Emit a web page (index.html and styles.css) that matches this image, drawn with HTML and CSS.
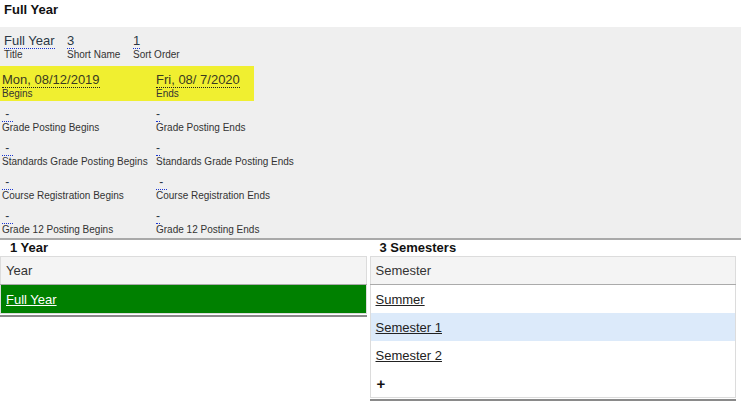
FILE: index.html
```html
<!DOCTYPE html>
<html lang="en">
<head>
    <meta charset="UTF-8">
    <meta name="viewport" content="width=device-width, initial-scale=1.0">
    <title>Full Year</title>
    <link rel="stylesheet" href="styles.css">
</head>
<body>

    <h1 class="page-title">Full Year</h1>

    <!-- Term details -->
    <div class="details">
        <div class="row row-top">
            <div class="field f-title">
                <span class="value">Full Year</span>
                <span class="label">Title</span>
            </div>
            <div class="field f-short">
                <span class="value">3</span>
                <span class="label">Short Name</span>
            </div>
            <div class="field">
                <span class="value">1</span>
                <span class="label">Sort Order</span>
            </div>
        </div>

        <div class="row row-dates">
            <div class="field col-left">
                <span class="value">Mon, 08/12/2019</span>
                <span class="label">Begins</span>
            </div>
            <div class="field">
                <span class="value">Fri, 08/ 7/2020</span>
                <span class="label">Ends</span>
            </div>
        </div>

        <div class="row row-small">
            <div class="field col-left">
                <span class="value dash">&nbsp;-&nbsp;</span>
                <span class="label">Grade Posting Begins</span>
            </div>
            <div class="field">
                <span class="value dash">-</span>
                <span class="label">Grade Posting Ends</span>
            </div>
        </div>

        <div class="row row-small">
            <div class="field col-left">
                <span class="value dash">&nbsp;-&nbsp;</span>
                <span class="label">Standards Grade Posting Begins</span>
            </div>
            <div class="field">
                <span class="value dash">-</span>
                <span class="label">Standards Grade Posting Ends</span>
            </div>
        </div>

        <div class="row row-small">
            <div class="field col-left">
                <span class="value dash">&nbsp;-&nbsp;</span>
                <span class="label">Course Registration Begins</span>
            </div>
            <div class="field">
                <span class="value dash">&nbsp;-&nbsp;</span>
                <span class="label">Course Registration Ends</span>
            </div>
        </div>

        <div class="row row-small">
            <div class="field col-left">
                <span class="value dash">&nbsp;-&nbsp;</span>
                <span class="label">Grade 12 Posting Begins</span>
            </div>
            <div class="field">
                <span class="value dash">-</span>
                <span class="label">Grade 12 Posting Ends</span>
            </div>
        </div>
    </div>

    <!-- Years and semesters -->
    <div class="lists">
        <div class="list">
            <h2>1 Year</h2>
            <div class="box">
                <table>
                    <thead>
                        <tr><th>Year</th></tr>
                    </thead>
                    <tbody>
                        <tr class="selected"><td><a href="#">Full Year</a></td></tr>
                    </tbody>
                </table>
            </div>
        </div>

        <div class="list">
            <h2>3 Semesters</h2>
            <div class="box">
                <table>
                    <thead>
                        <tr><th>Semester</th></tr>
                    </thead>
                    <tbody>
                        <tr><td><a href="#">Summer</a></td></tr>
                        <tr class="hover"><td><a href="#">Semester 1</a></td></tr>
                        <tr><td><a href="#">Semester 2</a></td></tr>
                        <tr><td class="add">+</td></tr>
                    </tbody>
                </table>
            </div>
        </div>
    </div>

</body>
</html>
```

FILE: styles.css
```css
body {
    margin: 0;
    font-family: "Liberation Sans", Arial, sans-serif;
    color: #333;
}
.page-title {
    margin: 0;
    height: 27px;
    box-sizing: border-box;
    padding: 2px 4px;
    font-size: 13px;
    line-height: 16px;
    color: #111;
}
.details {
    background-color: #efefef;
    padding-top: 4px;
    padding-bottom: 1px;
    border-bottom: 2px solid #a9a9a9;
}
.row {
    display: flex;
}
.field .value {
    display: inline-block;
    font-size: 13px;
    line-height: 15px;
    color: #2b3745;
    border-bottom: 1px dotted #1a35d0;
}
.field .label {
    display: block;
    font-size: 10px;
    line-height: 12px;
    color: #333;
}
.row-top {
    height: 35px;
    padding-left: 4px;
}
.f-title {
    width: 63px;
}
.f-short {
    width: 66px;
}
.row-dates {
    width: 254px;
    height: 35px;
    box-sizing: border-box;
    padding: 4px 0 0 2px;
    background-color: #f0ef30;
}
.row-dates .value {
    color: #3a3a20;
    border-bottom-color: #222;
}
.col-left {
    width: 154px;
}
.row-small {
    height: 34px;
    box-sizing: border-box;
    padding: 3px 0 0 2px;
}
.row-small .value {
    line-height: 14px;
    font-size: 12px;
}
.lists {
    display: grid;
    grid-template-columns: 1fr 1fr;
    column-gap: 3px;
    padding-right: 5px;
}
.list h2 {
    margin: 0;
    padding-left: 10px;
    font-size: 13px;
    line-height: 16px;
    color: #111;
}
.box {
    border-bottom: 2px solid #8a8a8a;
    padding-bottom: 1px;
}
table {
    width: 100%;
    border-collapse: collapse;
    border: 1px solid #dcdcdc;
    font-size: 13px;
}
th {
    height: 27px;
    padding: 0 5px;
    text-align: left;
    font-weight: normal;
    color: #333;
    background-color: #f4f4f4;
    border-bottom: 1px solid #aaa;
}
td {
    height: 28px;
    padding: 0 5px;
}
td a {
    color: #222;
}
.selected td {
    background-color: #008000;
}
.selected td a {
    color: #fff;
}
.hover td {
    background-color: #dceafa;
}
.add {
    font-weight: bold;
    font-size: 15px;
    color: #111;
    padding-left: 6px;
}
```
